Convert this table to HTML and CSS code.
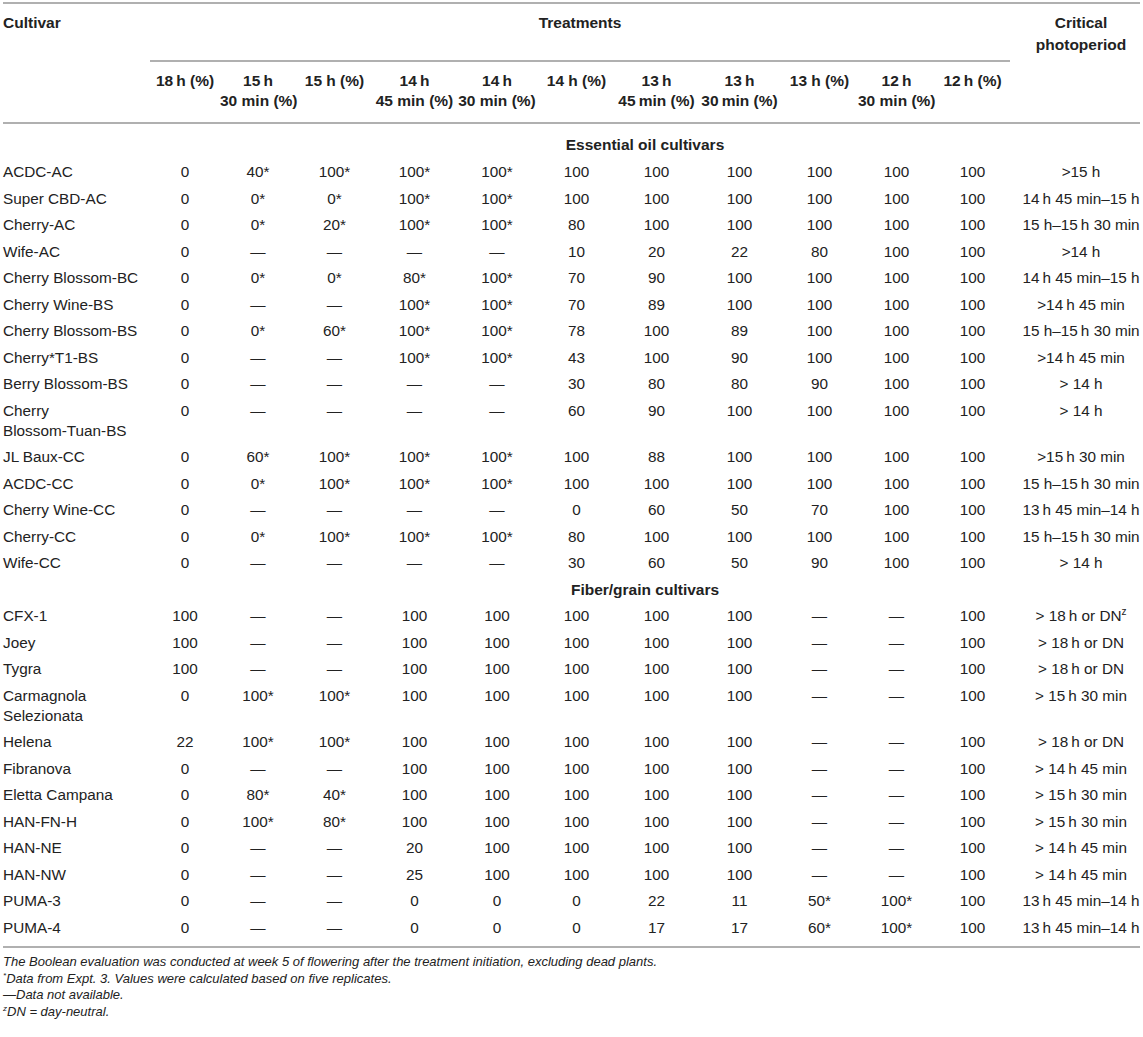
FILE: index.html
```html
<!DOCTYPE html>
<html lang="en">
<head>
<meta charset="utf-8">
<title>Critical photoperiod table</title>
<link rel="stylesheet" href="styles.css">
</head>
<body>
<div class="page">
<table class="data">
  <colgroup>
    <col class="c-cult">
    <col class="w70"><col class="w76"><col class="w77"><col class="w83"><col class="w82"><col class="w77">
    <col class="w83"><col class="w83"><col class="w77"><col class="w77"><col class="w75">
    <col class="c-crit">
  </colgroup>
  <thead>
    <tr>
      <th class="h-cult" rowspan="2">Cultivar</th>
      <th class="h-treat" colspan="11">Treatments</th>
      <th class="h-crit" rowspan="2">Critical<br>photoperiod</th>
    </tr>
    <tr class="h-sub">
      <th>18&#8201;h (%)</th>
      <th>15&#8201;h<br>30 min (%)</th>
      <th>15 h (%)</th>
      <th>14&#8201;h<br>45 min (%)</th>
      <th>14&#8201;h<br>30 min (%)</th>
      <th>14 h (%)</th>
      <th>13&#8201;h<br>45&#8201;min (%)</th>
      <th>13&#8201;h<br>30&#8201;min (%)</th>
      <th>13 h (%)</th>
      <th>12&#8201;h<br>30 min (%)</th>
      <th>12&#8201;h (%)</th>
    </tr>
  </thead>
  <tbody>
    <tr class="section first"><td></td><td colspan="12">Essential oil cultivars</td></tr>
    <tr><td>ACDC-AC</td><td>0</td><td>40*</td><td>100*</td><td>100*</td><td>100*</td><td>100</td><td>100</td><td>100</td><td>100</td><td>100</td><td>100</td><td class="crit">&gt;15 h</td></tr>
    <tr><td>Super CBD-AC</td><td>0</td><td>0*</td><td>0*</td><td>100*</td><td>100*</td><td>100</td><td>100</td><td>100</td><td>100</td><td>100</td><td>100</td><td class="crit">14&#8201;h 45 min&#8211;15 h</td></tr>
    <tr><td>Cherry-AC</td><td>0</td><td>0*</td><td>20*</td><td>100*</td><td>100*</td><td>80</td><td>100</td><td>100</td><td>100</td><td>100</td><td>100</td><td class="crit">15 h&#8211;15&#8201;h 30 min</td></tr>
    <tr><td>Wife-AC</td><td>0</td><td>&#8212;</td><td>&#8212;</td><td>&#8212;</td><td>&#8212;</td><td>10</td><td>20</td><td>22</td><td>80</td><td>100</td><td>100</td><td class="crit">&gt;14 h</td></tr>
    <tr><td>Cherry Blossom-BC</td><td>0</td><td>0*</td><td>0*</td><td>80*</td><td>100*</td><td>70</td><td>90</td><td>100</td><td>100</td><td>100</td><td>100</td><td class="crit">14&#8201;h 45 min&#8211;15 h</td></tr>
    <tr><td>Cherry Wine-BS</td><td>0</td><td>&#8212;</td><td>&#8212;</td><td>100*</td><td>100*</td><td>70</td><td>89</td><td>100</td><td>100</td><td>100</td><td>100</td><td class="crit">&gt;14&#8201;h 45 min</td></tr>
    <tr><td>Cherry Blossom-BS</td><td>0</td><td>0*</td><td>60*</td><td>100*</td><td>100*</td><td>78</td><td>100</td><td>89</td><td>100</td><td>100</td><td>100</td><td class="crit">15 h&#8211;15&#8201;h 30 min</td></tr>
    <tr><td>Cherry*T1-BS</td><td>0</td><td>&#8212;</td><td>&#8212;</td><td>100*</td><td>100*</td><td>43</td><td>100</td><td>90</td><td>100</td><td>100</td><td>100</td><td class="crit">&gt;14&#8201;h 45 min</td></tr>
    <tr><td>Berry Blossom-BS</td><td>0</td><td>&#8212;</td><td>&#8212;</td><td>&#8212;</td><td>&#8212;</td><td>30</td><td>80</td><td>80</td><td>90</td><td>100</td><td>100</td><td class="crit">&gt; 14 h</td></tr>
    <tr><td>Cherry <span class="nw">Blossom-Tuan-BS</span></td><td>0</td><td>&#8212;</td><td>&#8212;</td><td>&#8212;</td><td>&#8212;</td><td>60</td><td>90</td><td>100</td><td>100</td><td>100</td><td>100</td><td class="crit">&gt; 14 h</td></tr>
    <tr><td>JL Baux-CC</td><td>0</td><td>60*</td><td>100*</td><td>100*</td><td>100*</td><td>100</td><td>88</td><td>100</td><td>100</td><td>100</td><td>100</td><td class="crit">&gt;15&#8201;h 30 min</td></tr>
    <tr><td>ACDC-CC</td><td>0</td><td>0*</td><td>100*</td><td>100*</td><td>100*</td><td>100</td><td>100</td><td>100</td><td>100</td><td>100</td><td>100</td><td class="crit">15 h&#8211;15&#8201;h 30 min</td></tr>
    <tr><td>Cherry Wine-CC</td><td>0</td><td>&#8212;</td><td>&#8212;</td><td>&#8212;</td><td>&#8212;</td><td>0</td><td>60</td><td>50</td><td>70</td><td>100</td><td>100</td><td class="crit">13&#8201;h 45 min&#8211;14 h</td></tr>
    <tr><td>Cherry-CC</td><td>0</td><td>0*</td><td>100*</td><td>100*</td><td>100*</td><td>80</td><td>100</td><td>100</td><td>100</td><td>100</td><td>100</td><td class="crit">15 h&#8211;15&#8201;h 30 min</td></tr>
    <tr><td>Wife-CC</td><td>0</td><td>&#8212;</td><td>&#8212;</td><td>&#8212;</td><td>&#8212;</td><td>30</td><td>60</td><td>50</td><td>90</td><td>100</td><td>100</td><td class="crit">&gt; 14 h</td></tr>
    <tr class="section"><td></td><td colspan="12">Fiber/grain cultivars</td></tr>
    <tr><td>CFX-1</td><td>100</td><td>&#8212;</td><td>&#8212;</td><td>100</td><td>100</td><td>100</td><td>100</td><td>100</td><td>&#8212;</td><td>&#8212;</td><td>100</td><td class="crit">&gt; 18&#8201;h or DN<sup class="z">z</sup></td></tr>
    <tr><td>Joey</td><td>100</td><td>&#8212;</td><td>&#8212;</td><td>100</td><td>100</td><td>100</td><td>100</td><td>100</td><td>&#8212;</td><td>&#8212;</td><td>100</td><td class="crit">&gt; 18&#8201;h or DN</td></tr>
    <tr><td>Tygra</td><td>100</td><td>&#8212;</td><td>&#8212;</td><td>100</td><td>100</td><td>100</td><td>100</td><td>100</td><td>&#8212;</td><td>&#8212;</td><td>100</td><td class="crit">&gt; 18&#8201;h or DN</td></tr>
    <tr><td>Carmagnola Selezionata</td><td>0</td><td>100*</td><td>100*</td><td>100</td><td>100</td><td>100</td><td>100</td><td>100</td><td>&#8212;</td><td>&#8212;</td><td>100</td><td class="crit">&gt; 15&#8201;h 30 min</td></tr>
    <tr><td>Helena</td><td>22</td><td>100*</td><td>100*</td><td>100</td><td>100</td><td>100</td><td>100</td><td>100</td><td>&#8212;</td><td>&#8212;</td><td>100</td><td class="crit">&gt; 18&#8201;h or DN</td></tr>
    <tr><td>Fibranova</td><td>0</td><td>&#8212;</td><td>&#8212;</td><td>100</td><td>100</td><td>100</td><td>100</td><td>100</td><td>&#8212;</td><td>&#8212;</td><td>100</td><td class="crit">&gt; 14&#8201;h 45 min</td></tr>
    <tr><td>Eletta Campana</td><td>0</td><td>80*</td><td>40*</td><td>100</td><td>100</td><td>100</td><td>100</td><td>100</td><td>&#8212;</td><td>&#8212;</td><td>100</td><td class="crit">&gt; 15&#8201;h 30 min</td></tr>
    <tr><td>HAN-FN-H</td><td>0</td><td>100*</td><td>80*</td><td>100</td><td>100</td><td>100</td><td>100</td><td>100</td><td>&#8212;</td><td>&#8212;</td><td>100</td><td class="crit">&gt; 15&#8201;h 30 min</td></tr>
    <tr><td>HAN-NE</td><td>0</td><td>&#8212;</td><td>&#8212;</td><td>20</td><td>100</td><td>100</td><td>100</td><td>100</td><td>&#8212;</td><td>&#8212;</td><td>100</td><td class="crit">&gt; 14&#8201;h 45 min</td></tr>
    <tr><td>HAN-NW</td><td>0</td><td>&#8212;</td><td>&#8212;</td><td>25</td><td>100</td><td>100</td><td>100</td><td>100</td><td>&#8212;</td><td>&#8212;</td><td>100</td><td class="crit">&gt; 14&#8201;h 45 min</td></tr>
    <tr><td>PUMA-3</td><td>0</td><td>&#8212;</td><td>&#8212;</td><td>0</td><td>0</td><td>0</td><td>22</td><td>11</td><td>50*</td><td>100*</td><td>100</td><td class="crit">13&#8201;h 45 min&#8211;14 h</td></tr>
    <tr class="last"><td>PUMA-4</td><td>0</td><td>&#8212;</td><td>&#8212;</td><td>0</td><td>0</td><td>0</td><td>17</td><td>17</td><td>60*</td><td>100*</td><td>100</td><td class="crit">13&#8201;h 45 min&#8211;14 h</td></tr>
  </tbody>
</table>
<div class="notes">
  <p>The Boolean evaluation was conducted at week 5 of flowering after the treatment initiation, excluding dead plants.</p>
  <p><sup>*</sup>Data from Expt. 3. Values were calculated based on five replicates.</p>
  <p>&#8212;Data not available.</p>
  <p><sup>z</sup>DN = day-neutral.</p>
</div>
</div>
</body>
</html>
```

FILE: styles.css
```css
body {
  margin: 0;
  background: #fff;
  color: #222;
  font-family: "Liberation Sans", Arial, Helvetica, sans-serif;
}

.page {
  padding: 2px 3px 0;
}

.data {
  width: 1137px;
  table-layout: fixed;
  border-collapse: separate;
  border-spacing: 0;
  border-top: 2px solid #b0b0b0;
  font-size: 15.3px;
  line-height: 20px;
}

.c-cult { width: 147px; }
.w70 { width: 70px; }
.w75 { width: 75px; }
.w76 { width: 76px; }
.w77 { width: 77px; }
.w82 { width: 82px; }
.w83 { width: 83px; }
.c-crit { width: 130px; }

th {
  font-weight: bold;
  font-size: 15.5px;
  white-space: nowrap;
  vertical-align: top;
  text-align: center;
}

.h-cult {
  text-align: left;
  padding: 9px 0 0;
  border-bottom: 2px solid #b0b0b0;
}

.h-treat {
  padding: 9px 0 27px;
  border-bottom: 2px solid #b0b0b0;
}

.h-crit {
  padding: 8px 0 0 12px;
  line-height: 22px;
  border-bottom: 2px solid #b0b0b0;
}

.h-sub th {
  padding: 9px 0 11px;
  line-height: 20px;
  border-bottom: 2px solid #b0b0b0;
}

td {
  padding: 3.25px 0;
  text-align: center;
  vertical-align: top;
}

td:first-child {
  text-align: left;
}

.nw {
  white-space: nowrap;
}

td.crit {
  padding-left: 12px;
  white-space: nowrap;
}

.section td {
  font-weight: bold;
  font-size: 15.5px;
}

.section.first td {
  padding-top: 11px;
  padding-bottom: 4px;
}

.last td {
  padding-bottom: 8.5px;
  border-bottom: 2px solid #b0b0b0;
}

sup.z {
  font-size: 10px;
  line-height: 0;
  vertical-align: 6px;
}

.notes {
  margin-top: 6px;
  font-size: 13px;
  line-height: 16.5px;
  font-style: italic;
}

.notes p {
  margin: 0;
}

.notes sup {
  font-size: 8px;
  line-height: 0;
  vertical-align: 5px;
}
```
